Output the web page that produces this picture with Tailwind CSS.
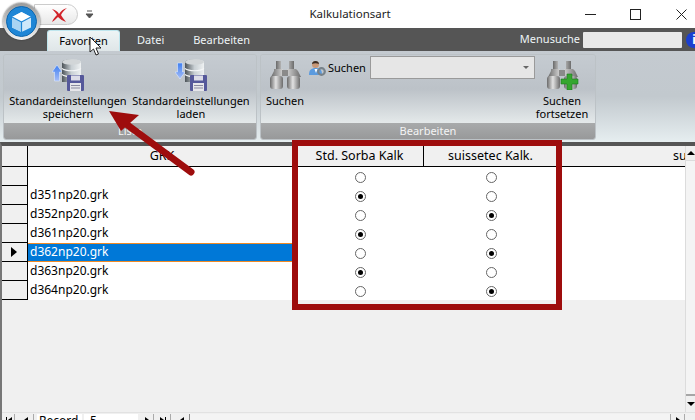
<!DOCTYPE html>
<html lang="de">

<head>
    <meta charset="UTF-8">
    <title>Kalkulationsart</title>
    <script src="https://cdn.jsdelivr.net/npm/@tailwindcss/browser@4"></script>
</head>

<body class="relative w-[695px] h-[420px] overflow-hidden bg-white font-['Noto_Sans',sans-serif] text-[11px] text-black">

    <!-- title bar -->
    <div class="h-[28px] flex items-center justify-center bg-white text-[11.500px] text-[#222]">
        <span class="ml-[5px]">Kalkulationsart</span>
    </div>

    <!-- tab row -->
    <div class="h-[23px] bg-[#555555] flex items-end pl-[47px] text-[#eef4f6]">
        <div class="w-[73px] h-[21px] flex items-center justify-center rounded-t-[3px] border-x border-t border-[#bfe6ee] bg-gradient-to-b from-[#eef4f5] to-[#dfe6e8] text-black">Favoriten</div>
        <div class="ml-[17px] h-[21px] flex items-center">Datei</div>
        <div class="ml-[29px] h-[21px] flex items-center">Bearbeiten</div>
        <div class="ml-auto h-[23px] flex items-center">
            <span class="mr-[3px]">Menusuche</span>
            <div class="w-[99px] h-[16px] bg-[#e8e8e8] rounded-[1px]"></div>
            <div class="ml-[4px] w-[9px] h-[16px] overflow-hidden shrink-0">
                <div class="w-[16px] h-[16px] rounded-full bg-[#1b3fd0] text-center text-white font-bold leading-[16px] text-[12px]">i</div>
            </div>
        </div>
    </div>

    <!-- ribbon -->
    <div class="h-[91px] flex gap-[3px] pl-[3px] pt-[3px] pb-[2px] bg-gradient-to-b from-[#c4cad0] via-[#c2c9ce] to-[#e6eef0]">
        <div class="w-[254px] flex flex-col rounded-[3px] border border-[#bcc2c6] overflow-hidden">
            <div class="flex-1 flex bg-gradient-to-b from-[#c5cbd1] via-[#bcc2c8] to-[#e4e9ea]">
                <div class="w-[128px] flex flex-col items-center pt-[4px] shrink-0">
                    <svg width="32" height="32" viewBox="0 0 32 32">
                        <defs>
                            <linearGradient id="db" x1="0" x2="1" y1="0" y2="0">
                                <stop offset="0" stop-color="#4c5358"/>
                                <stop offset=".5" stop-color="#c9d0d4"/>
                                <stop offset="1" stop-color="#eef1f2"/>
                            </linearGradient>
                            <linearGradient id="blue" x1="0" x2="0" y1="0" y2="1">
                                <stop offset="0" stop-color="#3f7ff0"/>
                                <stop offset="1" stop-color="#a5bdf8"/>
                            </linearGradient>
                        </defs>
                        <path d="M0 13 5 6l5 7H7.500v9h-5v-9z" fill="url(#blue)" stroke="#dce9ff" stroke-width=".6"/>
                        <path d="M10 3c0-3.500 19-3.500 19 0v20H10z" fill="url(#db)"/>
                        <ellipse cx="19.500" cy="3" rx="9.500" ry="2.800" fill="#d2d6d8"/>
                        <path d="M10 9.500c4 3 15 3 19 0M10 15.500c4 3 15 3 19 0" stroke="#f4f6f7" stroke-width="1.100" fill="none"/>
                        <rect x="15" y="16" width="17" height="16" rx="1" fill="#55589a"/>
                        <rect x="19" y="16.500" width="9" height="5" fill="#dcdce8"/>
                        <rect x="18" y="24" width="11" height="8" fill="#e6e6ea"/>
                        <path d="M19 26.500h9M19 29h9" stroke="#8a8aa0"/>
                    </svg>
                    <div class="mt-[3px] text-center leading-[13px] whitespace-nowrap">Standardeinstellungen<br>speichern</div>
                </div>
                <div class="w-[118px] flex flex-col items-center pt-[4px] shrink-0">
                    <svg width="32" height="32" viewBox="0 0 32 32">
                        <path d="M0 13 5 20l5-7H7.500V4h-5v9z" fill="url(#blue)" stroke="#dce9ff" stroke-width=".6"/>
                        <path d="M10 3c0-3.500 19-3.500 19 0v20H10z" fill="url(#db)"/>
                        <ellipse cx="19.500" cy="3" rx="9.500" ry="2.800" fill="#d2d6d8"/>
                        <path d="M10 9.500c4 3 15 3 19 0M10 15.500c4 3 15 3 19 0" stroke="#f4f6f7" stroke-width="1.100" fill="none"/>
                        <rect x="15" y="16" width="17" height="16" rx="1" fill="#55589a"/>
                        <rect x="19" y="16.500" width="9" height="5" fill="#dcdce8"/>
                        <rect x="18" y="24" width="11" height="8" fill="#e6e6ea"/>
                        <path d="M19 26.500h9M19 29h9" stroke="#8a8aa0"/>
                    </svg>
                    <div class="mt-[3px] text-center leading-[13px] whitespace-nowrap">Standardeinstellungen<br>laden</div>
                </div>
            </div>
            <div class="h-[16px] bg-gradient-to-b from-[#a8aaab] to-[#98999a] text-center leading-[16px] text-[#f4f4f4]">Liste</div>
        </div>

        <div class="w-[336px] flex flex-col rounded-[3px] border border-[#bcc2c6] overflow-hidden">
            <div class="flex-1 flex bg-gradient-to-b from-[#c5cbd1] via-[#bcc2c8] to-[#e4e9ea]">
                <div class="w-[48px] shrink-0 flex flex-col items-center pt-[5px]">
                    <svg width="32" height="30" viewBox="0 0 32 30">
                        <defs>
                            <linearGradient id="steel" x1="0" x2="1" y1="0" y2="0">
                                <stop offset="0" stop-color="#6a6a6a"/>
                                <stop offset=".45" stop-color="#e2e2e2"/>
                                <stop offset="1" stop-color="#6c6c6c"/>
                            </linearGradient>
                        </defs>
                        <path d="M7 1h5v9H7zM20 1h5v9h-5z" fill="url(#steel)"/>
                        <path d="M5 9h9v5l-2 3-10 0 3-6zM18 9h9l2 2 3 6-10 0-4-3z" fill="url(#steel)"/>
                        <rect x="13" y="10" width="6" height="6" fill="#8a8a8a"/>
                        <rect x="1" y="16" width="13" height="13" rx="3" fill="url(#steel)"/>
                        <rect x="18" y="16" width="13" height="13" rx="3" fill="url(#steel)"/>
                    </svg>
                    <div class="mt-[4px] leading-[13px]">Suchen</div>
                </div>
                <div class="w-[226px] shrink-0 flex items-start">
                    <svg class="mt-[5px] shrink-0" width="17" height="17" viewBox="0 0 17 17">
                        <path d="M0 15c0-5 2-7 7-7s6 3 6 7z" fill="#5b9bdf"/>
                        <path d="M5.500 9h3L7 13z" fill="#fff"/>
                        <circle cx="6.500" cy="4.500" r="3.500" fill="#c89878"/>
                        <path d="M3 4c0-4 7-4 7 0-2-1-5-1-7 0z" fill="#3a2c24"/>
                        <circle cx="12.500" cy="11.500" r="3.300" fill="none" stroke="#77828a" stroke-width="2.200"/>
                    </svg>
                    <span class="ml-[2px] mt-[6px] w-[42px] shrink-0 leading-[13px]">Suchen</span>
                    <div class="mt-[1px] w-[165px] h-[23px] shrink-0 flex items-center justify-end pr-[5px] bg-[#e6e6e6] border border-[#9a9a9a]">
                        <div class="w-0 h-0 border-x-[3px] border-x-transparent border-t-[3px] border-t-[#666]"></div>
                    </div>
                </div>
                <div class="w-[54px] shrink-0 flex flex-col items-center pt-[5px]">
                    <svg width="33" height="30" viewBox="0 0 33 30">
                        <path d="M7 1h5v9H7zM20 1h5v9h-5z" fill="url(#steel)"/>
                        <path d="M5 9h9v5l-2 3-10 0 3-6zM18 9h9l2 2 3 6-10 0-4-3z" fill="url(#steel)"/>
                        <rect x="13" y="10" width="6" height="6" fill="#8a8a8a"/>
                        <rect x="1" y="16" width="13" height="13" rx="3" fill="url(#steel)"/>
                        <rect x="18" y="16" width="13" height="13" rx="3" fill="url(#steel)"/>
                        <path d="M21 14h5v5h6v5h-6v6h-5v-6h-6v-5h6z" fill="#35a62f" stroke="#1d7a1d" stroke-width=".6"/>
                    </svg>
                    <div class="mt-[4px] text-center leading-[13px] whitespace-nowrap">Suchen<br>fortsetzen</div>
                </div>
            </div>
            <div class="h-[16px] bg-gradient-to-b from-[#a8aaab] to-[#98999a] text-center leading-[16px] text-[#f4f4f4]">Bearbeiten</div>
        </div>
    </div>

    <!-- grid -->
    <div class="h-[278px] flex flex-col bg-[#f0f0f0] border-t-[4px] border-t-[#555] border-l-2 border-l-[#777] text-[12px]">
        <div class="flex-1 flex min-h-0">
            <div class="flex-1 flex flex-col min-w-0">
                <div class="flex h-[21px] shrink-0 border-b border-black text-[12.500px]">
                    <div class="w-[26px] border-r border-black"></div>
                    <div class="w-[268px] text-center leading-[20px]">GRK</div>
                    <div class="w-[128px] text-center leading-[20px] border-r border-black">Std. Sorba Kalk</div>
                    <div class="w-[133px] text-center leading-[20px]">suissetec Kalk.</div>
                    <div class="flex-1 flex justify-end overflow-hidden">
                        <span class="leading-[20px] w-[12px] overflow-hidden">su</span>
                    </div>
                </div>
                <div class="flex flex-col shrink-0 h-[133px]">
                    <div class="flex h-[19px]">
                        <div class="w-[26px] border-r border-b border-black"></div>
                        <div class="flex-1 flex bg-white">
                            <div class="w-[268px] pl-[2px] leading-[18px]"></div>
                            <div class="w-[128px] pt-[1px] flex items-center justify-center"><span class="w-[11px] h-[11px] rounded-full border border-[#666] bg-white"></span></div>
                            <div class="w-[134px] pt-[1px] flex items-center justify-center"><span class="w-[11px] h-[11px] rounded-full border border-[#666] bg-white"></span></div>
                        </div>
                    </div>
                    <div class="flex h-[19px]">
                        <div class="w-[26px] border-r border-b border-black"></div>
                        <div class="flex-1 flex bg-white">
                            <div class="w-[268px] pl-[2px] leading-[18px]">d351np20.grk</div>
                            <div class="w-[128px] pt-[1px] flex items-center justify-center"><span class="w-[11px] h-[11px] rounded-full border border-[#666] bg-white p-[2px]"><span class="block w-[5px] h-[5px] rounded-full bg-black"></span></span></div>
                            <div class="w-[134px] pt-[1px] flex items-center justify-center"><span class="w-[11px] h-[11px] rounded-full border border-[#666] bg-white"></span></div>
                        </div>
                    </div>
                    <div class="flex h-[19px]">
                        <div class="w-[26px] border-r border-b border-black"></div>
                        <div class="flex-1 flex bg-white">
                            <div class="w-[268px] pl-[2px] leading-[18px]">d352np20.grk</div>
                            <div class="w-[128px] pt-[1px] flex items-center justify-center"><span class="w-[11px] h-[11px] rounded-full border border-[#666] bg-white"></span></div>
                            <div class="w-[134px] pt-[1px] flex items-center justify-center"><span class="w-[11px] h-[11px] rounded-full border border-[#666] bg-white p-[2px]"><span class="block w-[5px] h-[5px] rounded-full bg-black"></span></span></div>
                        </div>
                    </div>
                    <div class="flex h-[19px]">
                        <div class="w-[26px] border-r border-b border-black"></div>
                        <div class="flex-1 flex bg-white">
                            <div class="w-[268px] pl-[2px] leading-[18px]">d361np20.grk</div>
                            <div class="w-[128px] pt-[1px] flex items-center justify-center"><span class="w-[11px] h-[11px] rounded-full border border-[#666] bg-white p-[2px]"><span class="block w-[5px] h-[5px] rounded-full bg-black"></span></span></div>
                            <div class="w-[134px] pt-[1px] flex items-center justify-center"><span class="w-[11px] h-[11px] rounded-full border border-[#666] bg-white"></span></div>
                        </div>
                    </div>
                    <div class="flex h-[19px]">
                        <div class="w-[26px] border-r border-b border-black flex items-center justify-center pr-[2px]">
                            <div class="w-0 h-0 border-y-[5px] border-y-transparent border-l-[6px] border-l-black"></div>
                        </div>
                        <div class="flex-1 flex bg-white">
                            <div class="w-[268px] pl-[2px] leading-[16px] bg-[#0078d7] text-white border-y border-[#f08a24]">d362np20.grk</div>
                            <div class="w-[128px] pt-[1px] flex items-center justify-center"><span class="w-[11px] h-[11px] rounded-full border border-[#666] bg-white"></span></div>
                            <div class="w-[134px] pt-[1px] flex items-center justify-center"><span class="w-[11px] h-[11px] rounded-full border border-[#666] bg-white p-[2px]"><span class="block w-[5px] h-[5px] rounded-full bg-black"></span></span></div>
                        </div>
                    </div>
                    <div class="flex h-[19px]">
                        <div class="w-[26px] border-r border-b border-black"></div>
                        <div class="flex-1 flex bg-white">
                            <div class="w-[268px] pl-[2px] leading-[18px]">d363np20.grk</div>
                            <div class="w-[128px] pt-[1px] flex items-center justify-center"><span class="w-[11px] h-[11px] rounded-full border border-[#666] bg-white p-[2px]"><span class="block w-[5px] h-[5px] rounded-full bg-black"></span></span></div>
                            <div class="w-[134px] pt-[1px] flex items-center justify-center"><span class="w-[11px] h-[11px] rounded-full border border-[#666] bg-white"></span></div>
                        </div>
                    </div>
                    <div class="flex h-[19px]">
                        <div class="w-[26px] border-r border-b border-black"></div>
                        <div class="flex-1 flex bg-white">
                            <div class="w-[268px] pl-[2px] leading-[18px]">d364np20.grk</div>
                            <div class="w-[128px] pt-[1px] flex items-center justify-center"><span class="w-[11px] h-[11px] rounded-full border border-[#666] bg-white"></span></div>
                            <div class="w-[134px] pt-[1px] flex items-center justify-center"><span class="w-[11px] h-[11px] rounded-full border border-[#666] bg-white p-[2px]"><span class="block w-[5px] h-[5px] rounded-full bg-black"></span></span></div>
                        </div>
                    </div>
                </div>
            </div>
            <!-- vertical scrollbar -->
            <div class="w-[10px] shrink-0 flex flex-col border-l border-[#dcdcdc] bg-[#f0f0f0]">
                <div class="h-[15px] shrink-0 flex items-center justify-center border-b border-[#dcdcdc]">
                    <div class="w-0 h-0 border-x-[4px] border-x-transparent border-b-[4px] border-b-black"></div>
                </div>
                <div class="flex-1 bg-[#f4f4f4] border-b-2 border-[#a6a6a6]"></div>
                <div class="h-[16px] shrink-0 flex items-center justify-center">
                    <div class="w-0 h-0 border-x-[4px] border-x-transparent border-t-[4px] border-t-black"></div>
                </div>
            </div>
        </div>
        <!-- record navigator, cut off by the window -->
        <div class="h-[8px] shrink-0 flex items-start pt-[1px] leading-[14px] border-t border-[#e2e2e2]">
            <div class="w-[12px] h-[12px] ml-[1px] flex items-center justify-center gap-px border-r border-[#aaa]"><span class="w-px h-[6px] bg-black"></span><span class="w-0 h-0 border-y-[3px] border-y-transparent border-r-[4px] border-r-black"></span></div>
            <div class="w-[15px] h-[12px] ml-[4px] flex items-center justify-center border-r border-[#aaa]"><span class="w-0 h-0 border-y-[3px] border-y-transparent border-r-[4px] border-r-black"></span></div>
            <div class="w-[45px] h-[12px] ml-[3px] bg-white pl-[2px]">Record</div>
            <div class="w-[54px] h-[12px] ml-[2px] bg-white pl-[6px]">5</div>
            <div class="w-[14px] h-[12px] ml-[2px] flex items-center justify-center border-r border-[#aaa]"><span class="w-0 h-0 border-y-[3px] border-y-transparent border-l-[4px] border-l-black"></span></div>
            <div class="w-[15px] h-[12px] ml-[2px] flex items-center justify-center gap-px border-r border-[#aaa]"><span class="w-0 h-0 border-y-[3px] border-y-transparent border-l-[4px] border-l-black"></span><span class="w-px h-[6px] bg-black"></span></div>
            <div class="w-[15px] h-[12px] ml-[4px] flex items-center justify-center border-r border-[#888]"><span class="w-0 h-0 border-y-[3px] border-y-transparent border-r-[4px] border-r-black"></span></div>
            <div class="flex-1 h-[12px] bg-[#f4f4f4]"></div>
            <div class="w-[15px] h-[12px] mr-[10px] flex items-center justify-center border-x border-[#aaa] bg-[#f0f0f0]"><span class="w-0 h-0 border-y-[3px] border-y-transparent border-l-[4px] border-l-black"></span></div>
        </div>
    </div>

    <!-- window buttons -->
    <div class="absolute top-0 right-0 h-[28px] w-[115px] flex items-center">
        <svg class="ml-[5px]" width="11" height="11" viewBox="0 0 11 11"><path d="M0 5.500h11" stroke="#222"/></svg>
        <svg class="ml-[34px]" width="11" height="11" viewBox="0 0 11 11"><rect x=".5" y=".5" width="10" height="10" fill="none" stroke="#222"/></svg>
        <svg class="ml-[35px]" width="11" height="11" viewBox="0 0 11 11"><path d="M.5.5l10 10M10.500.5l-10 10" stroke="#222"/></svg>
    </div>

    <!-- quick access -->
    <div class="absolute left-[34px] top-[4px] w-[44px] h-[21px] rounded-r-full border border-[#ccc] bg-gradient-to-b from-white to-[#e8e8e8] flex items-center justify-center pl-[6px]">
        <svg width="18" height="16" viewBox="0 0 18 16"><path d="M2 2c4 1 6 3 7 5 2-3 4-5 8-6-3 2-5 5-6 7 1 2 3 4 5 7-3-1-6-3-8-5-2 2-3 3-6 5 1-3 3-5 5-7C6 6 4 4 2 2z" fill="#d2232a"/></svg>
    </div>
    <svg class="absolute left-[85px] top-[10px]" width="9" height="9" viewBox="0 0 9 9"><path d="M2 1h5M1 4h7l-3.500 4z" stroke="#555" fill="#555" stroke-width="1"/></svg>

    <!-- app orb -->
    <div class="absolute left-[3px] top-[3px] w-[37px] h-[37px] rounded-full bg-gradient-to-b from-[#9a9a9a] to-[#f2f2f2] p-[3px] shadow-[0_0_2px_#333]">
        <div class="w-full h-full rounded-full bg-[#1f86d6] border border-[#0f66ad] flex items-center justify-center">
            <svg width="21" height="22" viewBox="0 0 21 22"><path d="M10.500 1 20 6v10.500L10.500 21 1 16.500V6z" fill="#cfe8fa"/><path d="M10.500 1 20 6l-9.500 5L1 6z" fill="#fff"/><path d="M10.500 11v10L1 16.500V6z" fill="#a9d4f3"/><path d="M10.500 11 20 6M10.500 11 1 6M10.500 11v10" stroke="#1f86d6" stroke-width="1.200"/></svg>
        </div>
    </div>

    <!-- annotation: red frame -->
    <div class="absolute left-[292px] top-[140px] w-[270px] h-[170px] border-[6px] border-[#9e0d0d]"></div>

    <!-- annotation: arrow -->
    <svg class="absolute left-0 top-0" width="695" height="420" viewBox="0 0 695 420">
        <path d="M191 172 122 121" stroke="#9e0d0d" stroke-width="7" stroke-linecap="round"/>
        <path d="M109 111 139 115 121 131z" fill="#9e0d0d"/>
    </svg>

    <!-- mouse cursor -->
    <svg class="absolute left-[89px] top-[36px]" width="13" height="20" viewBox="0 0 13 20"><path d="M1 1v15l3.500-3 2.500 6 2.500-1-2.500-6H12z" fill="#fff" stroke="#222"/></svg>
</body>

</html>
